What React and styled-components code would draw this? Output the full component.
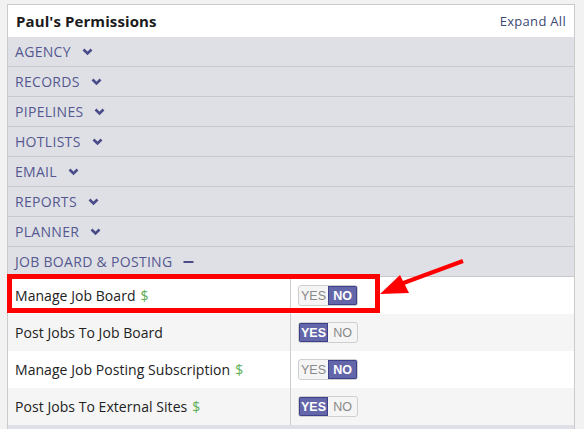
import React from "react";
import styled, { createGlobalStyle } from "styled-components";

const Global = createGlobalStyle`
  html, body { margin: 0; padding: 0; background: #f2f2f2; }
  body { font-family: "Open Sans", "Liberation Sans", sans-serif; }
`;

const Page = styled.div`
  position: relative;
  padding: 4px 9px 0 7px;
`;

const Panel = styled.div`
  border: 1px solid #cbcbcb;
  border-bottom: none;
  background: #fff;
`;

const Header = styled.div`
  height: 32px;
  display: flex;
  align-items: center;
  justify-content: space-between;
  padding: 0 8px 0 8px;
  background: #fff;
`;

const Title = styled.div`
  font-weight: 700;
  font-size: 15px;
  color: #1b1b1b;
  letter-spacing: 0.1px;
`;

const Expand = styled.div`
  font-size: 13px;
  color: #3c4874;
  letter-spacing: 0.3px;
`;

const Section = styled.div`
  height: 29px;
  border-bottom: 1px solid #c9c9cc;
  background: #dfe0e5;
  display: flex;
  align-items: center;
  padding-left: 7px;
  gap: 11px;
  color: #555890;
  font-size: 14px;
  text-transform: uppercase;
  letter-spacing: 0.3px;
`;

const Row = styled.div`
  height: 37px;
  display: grid;
  grid-template-columns: 283px 1fr;
  background: ${(p) => (p.$alt ? "#f5f5f5" : "#fff")};
`;

const Label = styled.div`
  display: flex;
  align-items: center;
  padding-left: 7px;
  font-size: 14px;
  color: #222;
  border-right: 1px solid #cdcdcd;
  letter-spacing: 0.05px;
`;

const Dollar = styled.span`
  color: #5cb054;
  margin-left: 5px;
`;

const Cell = styled.div`
  display: flex;
  align-items: center;
  padding-left: 7px;
`;

const Toggle = styled.div`
  display: flex;
  height: 19px;
  border-radius: 3px;
  overflow: hidden;
  border: 1px solid #cfcfcf;
  background: #f5f5f5;
`;

const Seg = styled.div`
  width: 29px;
  display: flex;
  align-items: center;
  justify-content: center;
  font-family: "Liberation Sans", Arial, sans-serif;
  font-size: 12.5px;
  font-weight: ${(p) => (p.$on ? 700 : 400)};
  color: ${(p) => (p.$on ? "#fff" : "#888")};
  background: ${(p) => (p.$on ? "#6466aa" : "transparent")};
  box-shadow: ${(p) => (p.$on ? "inset 0 0 0 1px #3e4189" : "none")};
`;

const Footer = styled.div`
  height: 4px;
  background: #dfe0e5;
`;

const Overlay = styled.svg`
  position: absolute;
  left: 0;
  top: 0;
  pointer-events: none;
`;

const Chevron = () => (
  <svg width="11" height="8" viewBox="0 0 11 8">
    <path d="M1.5 1.5 L5.5 5.5 L9.5 1.5" fill="none" stroke="#4a4c8a" strokeWidth="2.6" />
  </svg>
);

const Minus = () => (
  <svg width="11" height="8" viewBox="0 0 11 8">
    <rect x="0.5" y="3" width="10" height="2" fill="#4a4c8a" />
  </svg>
);

const sections = ["Agency", "Records", "Pipelines", "Hotlists", "Email", "Reports", "Planner"];

const perms = [
  { label: "Manage Job Board", paid: true, yes: false },
  { label: "Post Jobs To Job Board", paid: false, yes: true },
  { label: "Manage Job Posting Subscription", paid: true, yes: false },
  { label: "Post Jobs To External Sites", paid: true, yes: true },
];

export default function App() {
  return (
    <Page>
      <Global />
      <Panel>
        <Header>
          <Title>Paul's Permissions</Title>
          <Expand>Expand All</Expand>
        </Header>
        {sections.map((s) => (
          <Section key={s}>
            {s}
            <Chevron />
          </Section>
        ))}
        <Section>
          Job Board &amp; Posting
          <Minus />
        </Section>
        {perms.map((p, i) => (
          <Row key={p.label} $alt={i % 2 === 1}>
            <Label>
              {p.label}
              {p.paid && <Dollar>$</Dollar>}
            </Label>
            <Cell>
              <Toggle>
                <Seg $on={p.yes}>YES</Seg>
                <Seg $on={!p.yes}>NO</Seg>
              </Toggle>
            </Cell>
          </Row>
        ))}
        <Footer />
      </Panel>
      <Overlay width="584" height="429">
        <rect x="9.5" y="276.5" width="368" height="34" fill="none" stroke="#ff0000" strokeWidth="5" />
        <line x1="463" y1="261" x2="398" y2="285" stroke="#ff0000" strokeWidth="4" />
        <polygon points="380,294 400,275 409,293" fill="#ff0000" />
      </Overlay>
    </Page>
  );
}
